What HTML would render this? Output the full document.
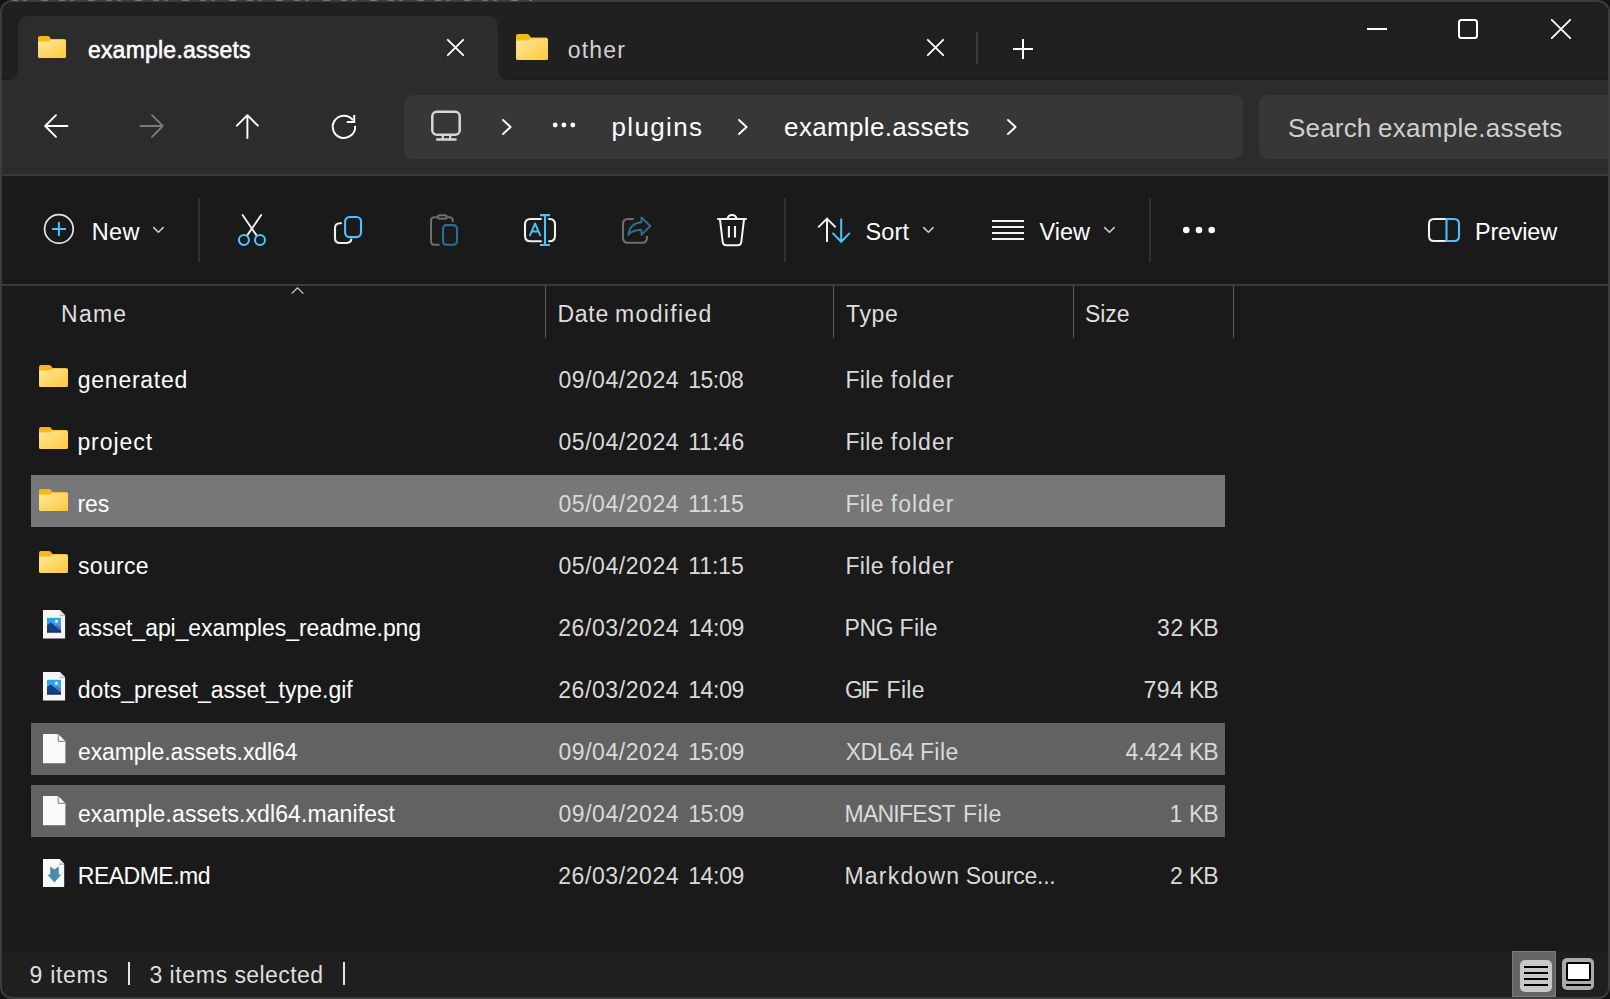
<!DOCTYPE html>
<html>
<head>
<meta charset="utf-8">
<title>example.assets</title>
<style>
*{box-sizing:border-box;margin:0;padding:0}
html,body{width:1610px;height:999px;overflow:hidden;background:#1a1a1a;font-family:"Liberation Sans",sans-serif;}
body{position:relative;color:#fff}
.a{position:absolute}
.t{position:absolute;white-space:nowrap;line-height:1;font-size:24px;color:#fff}
svg{position:absolute;overflow:visible}
.vsep{width:2px;background:#303030;top:198px;height:64px}
.hsep{width:1px;background:#5e5e5e;top:286px;height:52px}
.sel{left:31px;width:1194px;height:52px;background:#626262}
</style>
</head>
<body>
<!-- window frame -->
<div class="a" style="left:0;top:0;width:1610px;height:999px;background:#121212"></div>
<div class="a" style="left:0;top:0;width:1610px;height:999px;border:2px solid #3d3d3d;border-radius:12px;background:#1a1a1a"></div>
<div class="a" style="left:2px;top:2px;width:1606px;height:78px;background:#202020;border-radius:10px 10px 0 0"></div>
<div class="a" style="left:2px;top:78px;width:1606px;height:2px;background:#1c1c1c"></div>
<div class="a" style="left:2px;top:80px;width:1606px;height:95px;background:#2c2c2c"></div>
<div class="a" style="left:2px;top:174px;width:1606px;height:2px;background:#3a3a3a"></div>
<div class="a" style="left:2px;top:284px;width:1606px;height:2px;background:#3c3c3c"></div>
<div class="a" style="left:2px;top:951px;width:1606px;height:46px;background:#1f1f1f;border-radius:0 0 10px 10px"></div>
<!-- faint desktop text bleeding through top border -->
<div class="a" style="left:12px;top:0;width:520px;height:1px;background:repeating-linear-gradient(90deg,#b0b0b0 0 6px,#3d3d3d 6px 11px,#a0a0a0 11px 15px,#3d3d3d 15px 29px,#c0b8a8 29px 36px,#3d3d3d 36px 47px);opacity:.45"></div>

<!-- tabs -->
<div class="a" style="left:18px;top:16px;width:480px;height:64px;background:#2c2c2c;border-radius:10px 10px 0 0"></div>
<svg style="left:8px;top:70px" width="10" height="10"><path d="M10 0 V10 H0 A10 10 0 0 0 10 0Z" fill="#2c2c2c"/></svg>
<svg style="left:498px;top:70px" width="10" height="10"><path d="M0 0 V10 H10 A10 10 0 0 1 0 0Z" fill="#2c2c2c"/></svg>
<div class="a" style="left:976px;top:32px;width:2px;height:32px;background:#3a3a3a"></div>
<svg width="0" height="0" style="left:0;top:0">
<defs>
<linearGradient id="fg" x1="0" y1="0" x2="1" y2="1"><stop offset="0" stop-color="#ffe79c"/><stop offset="1" stop-color="#ffc93a"/></linearGradient>
<linearGradient id="sky" x1="0" y1="0" x2="1" y2="1"><stop offset="0" stop-color="#1fa7e6"/><stop offset="0.6" stop-color="#3fa0e8"/><stop offset="1" stop-color="#7a7fe0"/></linearGradient>
</defs>
</svg>

<!-- tab icons -->
<svg style="left:38px;top:36px" width="28" height="22" viewBox="0 0 29 22" preserveAspectRatio="none"><path d="M0 2 Q0 0 2 0 H10 Q11 0 11.8 .8 L13.6 3 H27 Q29 3 29 5 V20 Q29 22 27 22 H2 Q0 22 0 20Z" fill="#f8b918"/><path d="M0 7 Q0 5.6 1.5 5.6 H10 Q11 5.6 11.8 5 L13 4.1 Q13.6 3.8 14.4 3.8 H27.4 Q29 3.8 29 5.3 V20.3 Q29 22 27.3 22 H1.7 Q0 22 0 20.3Z" fill="url(#fg)"/></svg>
<svg style="left:516px;top:34px" width="32" height="26" viewBox="0 0 29 22" preserveAspectRatio="none"><path d="M0 2 Q0 0 2 0 H10 Q11 0 11.8 .8 L13.6 3 H27 Q29 3 29 5 V20 Q29 22 27 22 H2 Q0 22 0 20Z" fill="#f8b918"/><path d="M0 7 Q0 5.6 1.5 5.6 H10 Q11 5.6 11.8 5 L13 4.1 Q13.6 3.8 14.4 3.8 H27.4 Q29 3.8 29 5.3 V20.3 Q29 22 27.3 22 H1.7 Q0 22 0 20.3Z" fill="url(#fg)"/></svg>
<!-- tab close / plus -->
<svg style="left:447px;top:39px" width="17" height="17"><path d="M.8 .8 L16.2 16.2 M16.2 .8 L.8 16.2" stroke="#fff" stroke-width="1.8" stroke-linecap="round"/></svg>
<svg style="left:927px;top:39px" width="17" height="17"><path d="M.8 .8 L16.2 16.2 M16.2 .8 L.8 16.2" stroke="#fff" stroke-width="1.8" stroke-linecap="round"/></svg>
<svg style="left:1013px;top:39px" width="20" height="20"><path d="M10 0 V20 M0 10 H20" stroke="#fff" stroke-width="2"/></svg>
<!-- window controls -->
<div class="a" style="left:1367px;top:28px;width:20px;height:2px;background:#fff"></div>
<div class="a" style="left:1458px;top:19px;width:20px;height:20px;border:2px solid #fff;border-radius:3.5px"></div>
<svg style="left:1551px;top:19px" width="20" height="20"><path d="M.8 .8 L19.2 19.2 M19.2 .8 L.8 19.2" stroke="#fff" stroke-width="1.8" stroke-linecap="round"/></svg>

<!-- nav arrows -->
<svg style="left:44px;top:114px" width="24" height="24"><path d="M23.5 12 H1.5 M12 1.2 L1.2 12 L12 22.800" fill="none" stroke="#fff" stroke-width="1.900" stroke-linecap="round" stroke-linejoin="round"/></svg>
<svg style="left:140px;top:114px" width="24" height="24"><path d="M.5 12 H22.500 M12 1.200 L22.800 12 L12 22.800" fill="none" stroke="#7a7a7a" stroke-width="1.900" stroke-linecap="round" stroke-linejoin="round"/></svg>
<svg style="left:236px;top:114px" width="24" height="25"><path d="M11.400 24 V1.500 M.9 11.700 L11.400 1.200 L21.900 11.700" fill="none" stroke="#fff" stroke-width="1.900" stroke-linecap="round" stroke-linejoin="round"/></svg>
<svg style="left:331px;top:114px" width="26" height="26"><path d="M24.100 11.800 A11.200 11.200 0 1 1 21.900 6.100" fill="none" stroke="#fff" stroke-width="2" stroke-linecap="butt"/><path d="M23.200 1.100 V7.900 H15.800" fill="none" stroke="#fff" stroke-width="2"/></svg>

<!-- address bar -->
<div class="a" style="left:404px;top:95px;width:839px;height:64px;background:#373737;border-radius:9px"></div>
<div class="a" style="left:1259px;top:95px;width:349px;height:64px;background:#373737;border-radius:9px 0 0 9px"></div>
<svg style="left:431px;top:110px" width="30" height="31"><rect x="1.3" y="1.8" width="27.4" height="23" rx="4.5" fill="none" stroke="#d6d6d6" stroke-width="2.5"/><path d="M11.8 25 V29 M19.2 25 V29" stroke="#d6d6d6" stroke-width="2.3"/><path d="M6.2 29.5 H24.6" stroke="#d6d6d6" stroke-width="2.4" stroke-linecap="round"/></svg>
<svg style="left:502px;top:119px" width="10" height="16"><path d="M1 1 L8.6 8 L1 15" fill="none" stroke="#fff" stroke-width="1.9" stroke-linecap="round" stroke-linejoin="round"/></svg>
<svg style="left:738px;top:119px" width="10" height="16"><path d="M1 1 L8.6 8 L1 15" fill="none" stroke="#fff" stroke-width="1.9" stroke-linecap="round" stroke-linejoin="round"/></svg>
<svg style="left:1006.5px;top:119px" width="10" height="16"><path d="M1 1 L8.6 8 L1 15" fill="none" stroke="#fff" stroke-width="1.9" stroke-linecap="round" stroke-linejoin="round"/></svg>
<svg style="left:552px;top:122px" width="24" height="6"><circle cx="3.2" cy="3" r="2.4" fill="#fff"/><circle cx="11.9" cy="3" r="2.4" fill="#fff"/><circle cx="20.8" cy="3" r="2.4" fill="#fff"/></svg>

<!-- toolbar -->
<div class="a vsep" style="left:198px"></div>
<div class="a vsep" style="left:784px"></div>
<div class="a vsep" style="left:1149px"></div>
<!-- new -->
<svg style="left:43px;top:213px" width="32" height="32"><circle cx="15.9" cy="15.9" r="14.3" fill="none" stroke="#e6e6e6" stroke-width="1.7"/><path d="M15.9 9 V23 M9 15.9 H23" stroke="#4cc2ff" stroke-width="2"/></svg>
<svg style="left:152.8px;top:227.4px" width="11" height="6"><path d="M.7 .6 L5.400 5.300 L10.100 .6" fill="none" stroke="#cfcfcf" stroke-width="1.500" stroke-linecap="round" stroke-linejoin="round"/></svg>
<svg style="left:922.6px;top:227.4px" width="11" height="6"><path d="M.7 .6 L5.400 5.300 L10.100 .6" fill="none" stroke="#cfcfcf" stroke-width="1.500" stroke-linecap="round" stroke-linejoin="round"/></svg>
<svg style="left:1103.6px;top:227.4px" width="11" height="6"><path d="M.7 .6 L5.400 5.300 L10.100 .6" fill="none" stroke="#cfcfcf" stroke-width="1.500" stroke-linecap="round" stroke-linejoin="round"/></svg>
<!-- cut -->
<svg style="left:237px;top:213px" width="30" height="34"><path d="M5.600 2 L19.700 22.600 M24.200 2 L10.200 22.400" stroke="#f0f0f0" stroke-width="1.9" stroke-linecap="round"/><circle cx="6.9" cy="27" r="5" fill="none" stroke="#4cc2ff" stroke-width="2.1"/><circle cx="23" cy="27" r="5" fill="none" stroke="#4cc2ff" stroke-width="2.1"/></svg>
<!-- copy -->
<svg style="left:333px;top:215px" width="30" height="30"><path d="M8 8.3 H7 Q2 8.3 2 13.3 V23 Q2 28 7 28 H13 Q17.5 28 18.3 24.5" fill="none" stroke="#f0f0f0" stroke-width="2.1" stroke-linecap="round"/><rect x="12.1" y="2" width="15.9" height="20.1" rx="4.5" fill="none" stroke="#4cc2ff" stroke-width="2.1"/></svg>
<!-- paste (disabled) -->
<svg style="left:429px;top:213px" width="30" height="34"><path d="M8.500 4.200 H5.500 Q2 4.200 2 7.700 V28.300 Q2 31.800 5.500 31.800 H10.600 M18.200 4.200 H20.300 Q23.800 4.200 23.800 7.700 V9" fill="none" stroke="#6e6e6e" stroke-width="2"/><rect x="8.900" y="2.300" width="8.800" height="3.500" rx="1.750" fill="none" stroke="#6e6e6e" stroke-width="2"/><rect x="14" y="12.1" width="14" height="19.7" rx="3.5" fill="none" stroke="#2d6f91" stroke-width="2.1"/></svg>
<!-- rename -->
<svg style="left:523px;top:213px" width="34" height="34"><path d="M18.7 6 H7.5 Q2 6 2 11.5 V22.8 Q2 28.3 7.500 28.3 H18.7 M25.3 6 H26.500 Q32 6 32 11.5 V22.8 Q32 28.3 26.500 28.3 H25.3" fill="none" stroke="#f0f0f0" stroke-width="2.1"/><path d="M17 2.100 H27 M17 32 H27 M22 2.100 V32" stroke="#4cc2ff" stroke-width="2.100"/><path d="M7 22.300 L12.100 10.500 L17.200 22.300 M8.800 18.500 H15.400" fill="none" stroke="#4cc2ff" stroke-width="1.900" stroke-linejoin="round" stroke-linecap="round"/></svg>
<!-- share (disabled) -->
<svg style="left:621px;top:215px" width="32" height="30"><path d="M12.800 4 H7 Q2 4 2 9 V22.700 Q2 27.700 7 27.700 H21 Q26 27.700 26 22.700 V21" fill="none" stroke="#6e6e6e" stroke-width="2.100"/><path d="M20.500 2.500 L29.300 11 L20.500 19.800 V15 Q11.500 14.700 7.300 19.900 Q9 8 20.500 7.200Z" fill="none" stroke="#2d6f91" stroke-width="1.900" stroke-linejoin="round"/></svg>
<!-- delete -->
<svg style="left:716px;top:213px" width="32" height="34"><path d="M2 6 H30 M11.500 5.800 A4.600 4.600 0 0 1 20.600 5.800" fill="none" stroke="#f4f4f4" stroke-width="2" stroke-linecap="round"/><path d="M4 6.400 L6.700 29 Q7.100 32.300 10.400 32.300 H21.600 Q24.900 32.300 25.300 29 L28 6.400" fill="none" stroke="#f4f4f4" stroke-width="2"/><path d="M12.900 13 V24.600 M19 13 V24.600" stroke="#f4f4f4" stroke-width="2.100"/></svg>
<!-- sort -->
<svg style="left:817px;top:217px" width="34" height="26"><path d="M10 25 V1.800 M1.200 10.400 L10 1.600 L18.700 10.400" fill="none" stroke="#f0f0f0" stroke-width="2" stroke-linejoin="miter"/><path d="M24.200 1.500 V24.600 M15.500 15.900 L24.200 24.700 L32.800 15.900" fill="none" stroke="#4cc2ff" stroke-width="2" stroke-linejoin="miter"/></svg>
<!-- view -->
<svg style="left:992px;top:219px" width="32" height="22"><path d="M0 2 H32 M0 8 H32 M0 14 H32 M0 20 H32" stroke="#f4f4f4" stroke-width="2"/></svg>
<!-- more -->
<svg style="left:1182px;top:226px" width="34" height="8"><circle cx="4.300" cy="4" r="3.300" fill="#fff"/><circle cx="17" cy="4" r="3.300" fill="#fff"/><circle cx="29.700" cy="4" r="3.300" fill="#fff"/></svg>
<!-- preview -->
<svg style="left:1427px;top:217px" width="34" height="26"><path d="M19.500 2 H7 Q2 2 2 7 V19 Q2 24 7 24 H19.500" fill="none" stroke="#f0f0f0" stroke-width="2.100"/><path d="M19.500 2 H27 Q32 2 32 7 V19 Q32 24 27 24 H19.500 Z" fill="none" stroke="#4cc2ff" stroke-width="2.100"/></svg>

<!-- header -->
<div class="a hsep" style="left:545px"></div>
<div class="a hsep" style="left:833px"></div>
<div class="a hsep" style="left:1073px"></div>
<div class="a hsep" style="left:1233px"></div>
<svg style="left:291px;top:287px" width="13" height="7"><path d="M.6 6.600 L6.500 .8 L12.400 6.600" fill="none" stroke="#cfcfcf" stroke-width="1.300"/></svg>

<!-- selection -->
<div class="a sel" style="top:475px;background:#777777"></div>
<div class="a sel" style="top:723px"></div>
<div class="a sel" style="top:785px"></div>

<!-- status bar -->
<div class="a" style="left:128px;top:962px;width:2px;height:23px;background:#e4e4e4"></div>
<div class="a" style="left:343px;top:962px;width:2px;height:23px;background:#e4e4e4"></div>
<div class="a" style="left:1512px;top:951px;width:44px;height:46px;background:#666;border:1px solid #7a7a7a"></div>
<div class="a" style="left:1520px;top:960px;width:32px;height:32px;background:#c8c8c8;border-radius:5px"></div>
<svg style="left:1524px;top:966px" width="24" height="21"><path d="M0 1 H24 M0 7 H24 M0 13 H24 M0 19 H24" stroke="#000" stroke-width="2"/></svg>
<div class="a" style="left:1562px;top:958px;width:32px;height:32px;background:#ababab;border-radius:5px"></div>
<div class="a" style="left:1566px;top:962px;width:25px;height:19px;background:#fff;border:2px solid #000;border-radius:2px"></div>
<div class="a" style="left:1566px;top:984px;width:25px;height:2px;background:#000"></div>

<!-- file icons -->
<svg style="left:39.2px;top:364.8px" width="29" height="22"><path d="M0 2 Q0 0 2 0 H10 Q11 0 11.8 .8 L13.6 3 H27 Q29 3 29 5 V20 Q29 22 27 22 H2 Q0 22 0 20Z" fill="#f8b918"/><path d="M0 7 Q0 5.6 1.5 5.6 H10 Q11 5.6 11.8 5 L13 4.1 Q13.6 3.8 14.4 3.8 H27.4 Q29 3.8 29 5.3 V20.3 Q29 22 27.3 22 H1.7 Q0 22 0 20.3Z" fill="url(#fg)"/></svg>
<svg style="left:39.2px;top:426.8px" width="29" height="22"><path d="M0 2 Q0 0 2 0 H10 Q11 0 11.8 .8 L13.6 3 H27 Q29 3 29 5 V20 Q29 22 27 22 H2 Q0 22 0 20Z" fill="#f8b918"/><path d="M0 7 Q0 5.6 1.5 5.6 H10 Q11 5.6 11.8 5 L13 4.1 Q13.6 3.8 14.4 3.8 H27.4 Q29 3.8 29 5.3 V20.3 Q29 22 27.3 22 H1.7 Q0 22 0 20.3Z" fill="url(#fg)"/></svg>
<svg style="left:39.2px;top:488.8px" width="29" height="22"><path d="M0 2 Q0 0 2 0 H10 Q11 0 11.8 .8 L13.6 3 H27 Q29 3 29 5 V20 Q29 22 27 22 H2 Q0 22 0 20Z" fill="#f8b918"/><path d="M0 7 Q0 5.6 1.5 5.6 H10 Q11 5.6 11.8 5 L13 4.1 Q13.6 3.8 14.4 3.8 H27.4 Q29 3.8 29 5.3 V20.3 Q29 22 27.3 22 H1.7 Q0 22 0 20.3Z" fill="url(#fg)"/></svg>
<svg style="left:39.2px;top:550.8px" width="29" height="22"><path d="M0 2 Q0 0 2 0 H10 Q11 0 11.8 .8 L13.6 3 H27 Q29 3 29 5 V20 Q29 22 27 22 H2 Q0 22 0 20Z" fill="#f8b918"/><path d="M0 7 Q0 5.6 1.5 5.6 H10 Q11 5.6 11.8 5 L13 4.1 Q13.6 3.8 14.4 3.8 H27.4 Q29 3.8 29 5.3 V20.3 Q29 22 27.3 22 H1.7 Q0 22 0 20.3Z" fill="url(#fg)"/></svg>
<svg style="left:43px;top:610.4px" width="23" height="29"><path d="M0 0 H16.8 L22.1 5.3 V28.6 H0Z" fill="#f6f6f7"/><path d="M16.8 0 V5.3 H22.1Z" fill="#e4e4e6"/><path d="M16.3 5.6 H22.1" stroke="#9a9a9a" stroke-width=".7"/><rect x="4" y="7.8" width="14" height="14.6" fill="url(#sky)"/><path d="M4 15 L8 12.6 L18 20.5 V22.4 H4Z" fill="#16417f"/><path d="M12.2 15.9 L14 14.6 L18 18 V20.5Z" fill="#4a6fd0"/><rect x="4" y="21.4" width="14" height="1" fill="#0b2b6d"/><circle cx="13.5" cy="11.2" r="1.5" fill="#f4f4f4"/></svg>
<svg style="left:43px;top:672.4px" width="23" height="29"><path d="M0 0 H16.8 L22.1 5.3 V28.6 H0Z" fill="#f6f6f7"/><path d="M16.8 0 V5.3 H22.1Z" fill="#e4e4e6"/><path d="M16.3 5.6 H22.1" stroke="#9a9a9a" stroke-width=".7"/><rect x="4" y="7.8" width="14" height="14.6" fill="url(#sky)"/><path d="M4 15 L8 12.6 L18 20.5 V22.4 H4Z" fill="#16417f"/><path d="M12.2 15.9 L14 14.6 L18 18 V20.5Z" fill="#4a6fd0"/><rect x="4" y="21.4" width="14" height="1" fill="#0b2b6d"/><circle cx="13.5" cy="11.2" r="1.5" fill="#f4f4f4"/></svg>
<svg style="left:43px;top:734.1px" width="23" height="30"><path d="M0 0 H15.2 L22.4 7.3 V29.3 H0Z" fill="#fafafa"/><path d="M15.2 0 V7.3 H22.4" fill="none" stroke="#7a7674" stroke-width="1"/></svg>
<svg style="left:43px;top:796.1px" width="23" height="30"><path d="M0 0 H15.2 L22.4 7.3 V29.3 H0Z" fill="#fafafa"/><path d="M15.2 0 V7.3 H22.4" fill="none" stroke="#7a7674" stroke-width="1"/></svg>
<svg style="left:43px;top:858.6px" width="22" height="28"><path d="M0 0 H16.5 L21.2 4.7 V28 H0Z" fill="#f8f9fa"/><path d="M16.5 0 V4.7 H21.2Z" fill="#e4e4e6"/><path d="M16 5.2 H21.2" stroke="#8a8a8a" stroke-width=".8"/><path d="M7.2 7.4 L11.4 10.4 L15.8 7.4 V15.4 H18.4 L11.4 23.4 L4.3 15.4 H7.2Z" fill="#4a8caa"/></svg>
<!-- text -->
<div class="t" style="left:87.89px;top:38.73px;font-size:23px;color:#ffffff;letter-spacing:0.225px;-webkit-text-stroke:0.55px #ffffff">example.assets</div>
<div class="t" style="left:567.64px;top:38.73px;font-size:23px;color:#d2d2d2;letter-spacing:1.218px">other</div>
<div class="t" style="left:611.44px;top:114.19px;font-size:26px;color:#ffffff;letter-spacing:1.358px">plugins</div>
<div class="t" style="left:784.08px;top:113.79px;font-size:26px;color:#ffffff;letter-spacing:0.343px">example.assets</div>
<div class="t" style="left:1288.01px;top:115.19px;font-size:26px;color:#cfcfcf;letter-spacing:0.187px">Search</div>
<div class="t" style="left:1378.08px;top:115.19px;font-size:26px;color:#cfcfcf;letter-spacing:0.281px">example.assets</div>
<div class="t" style="left:91.76px;top:221.12px;font-size:23.5px;color:#ffffff;letter-spacing:0.399px">New</div>
<div class="t" style="left:865.42px;top:221.11px;font-size:23.5px;color:#ffffff;letter-spacing:0.169px">Sort</div>
<div class="t" style="left:1039.61px;top:221.11px;font-size:23.5px;color:#ffffff;letter-spacing:-0.009px">View</div>
<div class="t" style="left:1474.95px;top:221.13px;font-size:23.5px;color:#ffffff;letter-spacing:-0.229px">Preview</div>
<div class="t" style="left:61.07px;top:302.73px;font-size:23px;color:#dedede;letter-spacing:1.234px">Name</div>
<div class="t" style="left:557.50px;top:302.73px;font-size:23px;color:#dedede;letter-spacing:0.725px">Date</div>
<div class="t" style="left:615.07px;top:302.73px;font-size:23px;color:#dedede;letter-spacing:1.343px">modified</div>
<div class="t" style="left:845.98px;top:302.73px;font-size:23px;color:#dedede;letter-spacing:0.680px">Type</div>
<div class="t" style="left:1085.09px;top:302.73px;font-size:23px;color:#dedede;letter-spacing:-0.110px">Size</div>
<div class="t" style="left:29.43px;top:963.73px;font-size:23px;color:#dedede;letter-spacing:0.000px">9</div>
<div class="t" style="left:50.25px;top:963.73px;font-size:23px;color:#dedede;letter-spacing:0.665px">items</div>
<div class="t" style="left:149.59px;top:963.73px;font-size:23px;color:#dedede;letter-spacing:0.000px">3</div>
<div class="t" style="left:169.42px;top:963.73px;font-size:23px;color:#dedede;letter-spacing:0.715px">items</div>
<div class="t" style="left:234.48px;top:963.73px;font-size:23px;color:#dedede;letter-spacing:0.404px">selected</div>
<div class="t" style="left:77.82px;top:368.53px;font-size:23px;color:#ffffff;letter-spacing:0.737px">generated</div>
<div class="t" style="left:558.44px;top:368.53px;font-size:23px;color:#d9d9d9;letter-spacing:0.561px">09/04/2024</div>
<div class="t" style="left:688.17px;top:368.53px;font-size:23px;color:#d9d9d9;letter-spacing:-0.451px">15:08</div>
<div class="t" style="left:845.49px;top:368.53px;font-size:23px;color:#d9d9d9;letter-spacing:0.312px">File</div>
<div class="t" style="left:890.71px;top:368.53px;font-size:23px;color:#d9d9d9;letter-spacing:1.033px">folder</div>
<div class="t" style="left:77.38px;top:430.53px;font-size:23px;color:#ffffff;letter-spacing:0.935px">project</div>
<div class="t" style="left:558.44px;top:430.53px;font-size:23px;color:#d9d9d9;letter-spacing:0.561px">05/04/2024</div>
<div class="t" style="left:688.17px;top:430.53px;font-size:23px;color:#d9d9d9;letter-spacing:0.062px">11:46</div>
<div class="t" style="left:845.49px;top:430.53px;font-size:23px;color:#d9d9d9;letter-spacing:0.312px">File</div>
<div class="t" style="left:890.71px;top:430.53px;font-size:23px;color:#d9d9d9;letter-spacing:1.033px">folder</div>
<div class="t" style="left:77.41px;top:492.53px;font-size:23px;color:#ffffff;letter-spacing:-0.044px">res</div>
<div class="t" style="left:558.44px;top:492.53px;font-size:23px;color:#d9d9d9;letter-spacing:0.561px">05/04/2024</div>
<div class="t" style="left:688.17px;top:492.53px;font-size:23px;color:#d9d9d9;letter-spacing:-0.023px">11:15</div>
<div class="t" style="left:845.49px;top:492.53px;font-size:23px;color:#d9d9d9;letter-spacing:0.312px">File</div>
<div class="t" style="left:890.71px;top:492.53px;font-size:23px;color:#d9d9d9;letter-spacing:1.033px">folder</div>
<div class="t" style="left:78.05px;top:554.53px;font-size:23px;color:#ffffff;letter-spacing:0.278px">source</div>
<div class="t" style="left:558.44px;top:554.53px;font-size:23px;color:#d9d9d9;letter-spacing:0.561px">05/04/2024</div>
<div class="t" style="left:688.17px;top:554.53px;font-size:23px;color:#d9d9d9;letter-spacing:-0.023px">11:15</div>
<div class="t" style="left:845.49px;top:554.53px;font-size:23px;color:#d9d9d9;letter-spacing:0.312px">File</div>
<div class="t" style="left:890.71px;top:554.53px;font-size:23px;color:#d9d9d9;letter-spacing:1.033px">folder</div>
<div class="t" style="left:77.80px;top:616.53px;font-size:23px;color:#ffffff;letter-spacing:-0.068px">asset_api_examples_readme.png</div>
<div class="t" style="left:558.23px;top:616.53px;font-size:23px;color:#d9d9d9;letter-spacing:0.585px">26/03/2024</div>
<div class="t" style="left:688.17px;top:616.53px;font-size:23px;color:#d9d9d9;letter-spacing:-0.330px">14:09</div>
<div class="t" style="left:844.50px;top:616.53px;font-size:23px;color:#d9d9d9;letter-spacing:-0.346px">PNG</div>
<div class="t" style="left:899.49px;top:616.53px;font-size:23px;color:#d9d9d9;letter-spacing:0.355px">File</div>
<div class="t" style="left:1157.02px;top:616.53px;font-size:23px;color:#d9d9d9;letter-spacing:0.584px">32</div>
<div class="t" style="left:1189.09px;top:616.53px;font-size:23px;color:#d9d9d9;letter-spacing:-1.261px">KB</div>
<div class="t" style="left:77.82px;top:678.53px;font-size:23px;color:#ffffff;letter-spacing:0.001px">dots_preset_asset_type.gif</div>
<div class="t" style="left:558.23px;top:678.53px;font-size:23px;color:#d9d9d9;letter-spacing:0.585px">26/03/2024</div>
<div class="t" style="left:688.17px;top:678.53px;font-size:23px;color:#d9d9d9;letter-spacing:-0.330px">14:09</div>
<div class="t" style="left:845.12px;top:678.53px;font-size:23px;color:#d9d9d9;letter-spacing:-2.317px">GIF</div>
<div class="t" style="left:886.50px;top:678.53px;font-size:23px;color:#d9d9d9;letter-spacing:0.337px">File</div>
<div class="t" style="left:1143.60px;top:678.53px;font-size:23px;color:#d9d9d9;letter-spacing:0.481px">794</div>
<div class="t" style="left:1189.09px;top:678.53px;font-size:23px;color:#d9d9d9;letter-spacing:-1.261px">KB</div>
<div class="t" style="left:77.93px;top:740.53px;font-size:23px;color:#ffffff;letter-spacing:-0.079px">example.assets.xdl64</div>
<div class="t" style="left:558.44px;top:740.53px;font-size:23px;color:#d9d9d9;letter-spacing:0.561px">09/04/2024</div>
<div class="t" style="left:688.17px;top:740.53px;font-size:23px;color:#d9d9d9;letter-spacing:-0.330px">15:09</div>
<div class="t" style="left:845.64px;top:740.53px;font-size:23px;color:#d9d9d9;letter-spacing:-0.472px">XDL64</div>
<div class="t" style="left:919.89px;top:740.53px;font-size:23px;color:#d9d9d9;letter-spacing:0.432px">File</div>
<div class="t" style="left:1125.45px;top:740.53px;font-size:23px;color:#d9d9d9;letter-spacing:-0.058px">4.424</div>
<div class="t" style="left:1189.09px;top:740.53px;font-size:23px;color:#d9d9d9;letter-spacing:-1.261px">KB</div>
<div class="t" style="left:77.93px;top:802.53px;font-size:23px;color:#ffffff;letter-spacing:0.093px">example.assets.xdl64.manifest</div>
<div class="t" style="left:558.44px;top:802.53px;font-size:23px;color:#d9d9d9;letter-spacing:0.561px">09/04/2024</div>
<div class="t" style="left:688.17px;top:802.53px;font-size:23px;color:#d9d9d9;letter-spacing:-0.330px">15:09</div>
<div class="t" style="left:844.50px;top:802.53px;font-size:23px;color:#d9d9d9;letter-spacing:-0.752px">MANIFEST</div>
<div class="t" style="left:963.07px;top:802.53px;font-size:23px;color:#d9d9d9;letter-spacing:0.425px">File</div>
<div class="t" style="left:1169.58px;top:802.53px;font-size:23px;color:#d9d9d9;letter-spacing:0.000px">1</div>
<div class="t" style="left:1189.09px;top:802.53px;font-size:23px;color:#d9d9d9;letter-spacing:-1.261px">KB</div>
<div class="t" style="left:77.80px;top:864.53px;font-size:23px;color:#ffffff;letter-spacing:-0.505px">README.md</div>
<div class="t" style="left:558.23px;top:864.53px;font-size:23px;color:#d9d9d9;letter-spacing:0.585px">26/03/2024</div>
<div class="t" style="left:688.17px;top:864.53px;font-size:23px;color:#d9d9d9;letter-spacing:-0.330px">14:09</div>
<div class="t" style="left:844.50px;top:864.53px;font-size:23px;color:#d9d9d9;letter-spacing:1.210px">Markdown</div>
<div class="t" style="left:965.87px;top:864.53px;font-size:23px;color:#d9d9d9;letter-spacing:-0.282px">Source...</div>
<div class="t" style="left:1169.95px;top:864.53px;font-size:23px;color:#d9d9d9;letter-spacing:0.000px">2</div>
<div class="t" style="left:1189.09px;top:864.53px;font-size:23px;color:#d9d9d9;letter-spacing:-1.261px">KB</div>
</body>
</html>
